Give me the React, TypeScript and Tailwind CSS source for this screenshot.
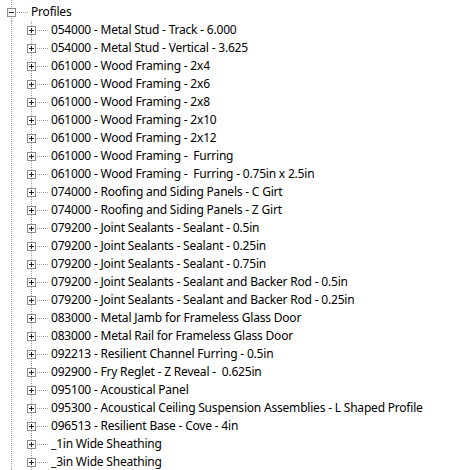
import React from 'react';

const profiles = [
  '054000 - Metal Stud - Track - 6.000',
  '054000 - Metal Stud - Vertical - 3.625',
  '061000 - Wood Framing - 2x4',
  '061000 - Wood Framing - 2x6',
  '061000 - Wood Framing - 2x8',
  '061000 - Wood Framing - 2x10',
  '061000 - Wood Framing - 2x12',
  '061000 - Wood Framing -  Furring',
  '061000 - Wood Framing -  Furring - 0.75in x 2.5in',
  '074000 - Roofing and Siding Panels - C Girt',
  '074000 - Roofing and Siding Panels - Z Girt',
  '079200 - Joint Sealants - Sealant - 0.5in',
  '079200 - Joint Sealants - Sealant - 0.25in',
  '079200 - Joint Sealants - Sealant - 0.75in',
  '079200 - Joint Sealants - Sealant and Backer Rod - 0.5in',
  '079200 - Joint Sealants - Sealant and Backer Rod - 0.25in',
  '083000 - Metal Jamb for Frameless Glass Door',
  '083000 - Metal Rail for Frameless Glass Door',
  '092213 - Resilient Channel Furring - 0.5in',
  '092900 - Fry Reglet - Z Reveal -  0.625in',
  '095100 - Acoustical Panel',
  '095300 - Acoustical Ceiling Suspension Assemblies - L Shaped Profile',
  '096513 - Resilient Base - Cove - 4in',
  '_1in Wide Sheathing',
  '_3in Wide Sheathing',
];

// dotted vertical guide that runs through a whole row
function Guide({ h }: { h: number }) {
  return (
    <svg width="20" height={h} className="shrink-0">
      <line x1="11.5" y1="0" x2="11.5" y2={h} stroke="#a0a0a0" strokeDasharray="1 1" />
    </svg>
  );
}

// expander box with its connector lines
function Expander({ h, open }: { h: number; open?: boolean }) {
  const cy = Math.floor(h / 2);
  return (
    <svg width="28" height={h} className="shrink-0">
      <line x1="11.5" y1="0" x2="11.5" y2={h} stroke="#a0a0a0" strokeDasharray="1 1" />
      <line x1="17" y1={cy + 0.5} x2="28" y2={cy + 0.5} stroke="#a0a0a0" strokeDasharray="1 1" />
      <rect x="7.5" y={cy - 3.5} width="8" height="8" fill="#fff" stroke="#8c8c8c" />
      <line x1="9" y1={cy + 0.5} x2="14" y2={cy + 0.5} stroke="#222" />
      {!open && <line x1="11.5" y1={cy - 2} x2="11.5" y2={cy + 3} stroke="#222" />}
    </svg>
  );
}

export default function App() {
  return (
    <div
      className="w-[453px] h-[470px] overflow-hidden bg-white text-black text-[12px] leading-[18px] tracking-[-0.2px]"
      style={{ fontFamily: '"Noto Sans", "Open Sans", sans-serif' }}
    >
      <div className="flex items-end h-[21px]">
        <svg width="28" height="21" className="shrink-0">
          <line x1="11.5" y1="0" x2="11.5" y2="21" stroke="#a0a0a0" strokeDasharray="1 1" />
          <line x1="17" y1="12.5" x2="28" y2="12.5" stroke="#a0a0a0" strokeDasharray="1 1" />
          <rect x="7.5" y="8.5" width="8" height="8" fill="#fff" stroke="#8c8c8c" />
          <line x1="9" y1="12.5" x2="14" y2="12.5" stroke="#222" />
        </svg>
        <span className="pl-[3px] h-[18px] whitespace-pre">Profiles</span>
      </div>
      {profiles.map((name) => (
        <div key={name} className="flex h-[18px]">
          <Guide h={18} />
          <Expander h={18} />
          <span className="pl-[3px] whitespace-pre">{name}</span>
        </div>
      ))}
    </div>
  );
}
